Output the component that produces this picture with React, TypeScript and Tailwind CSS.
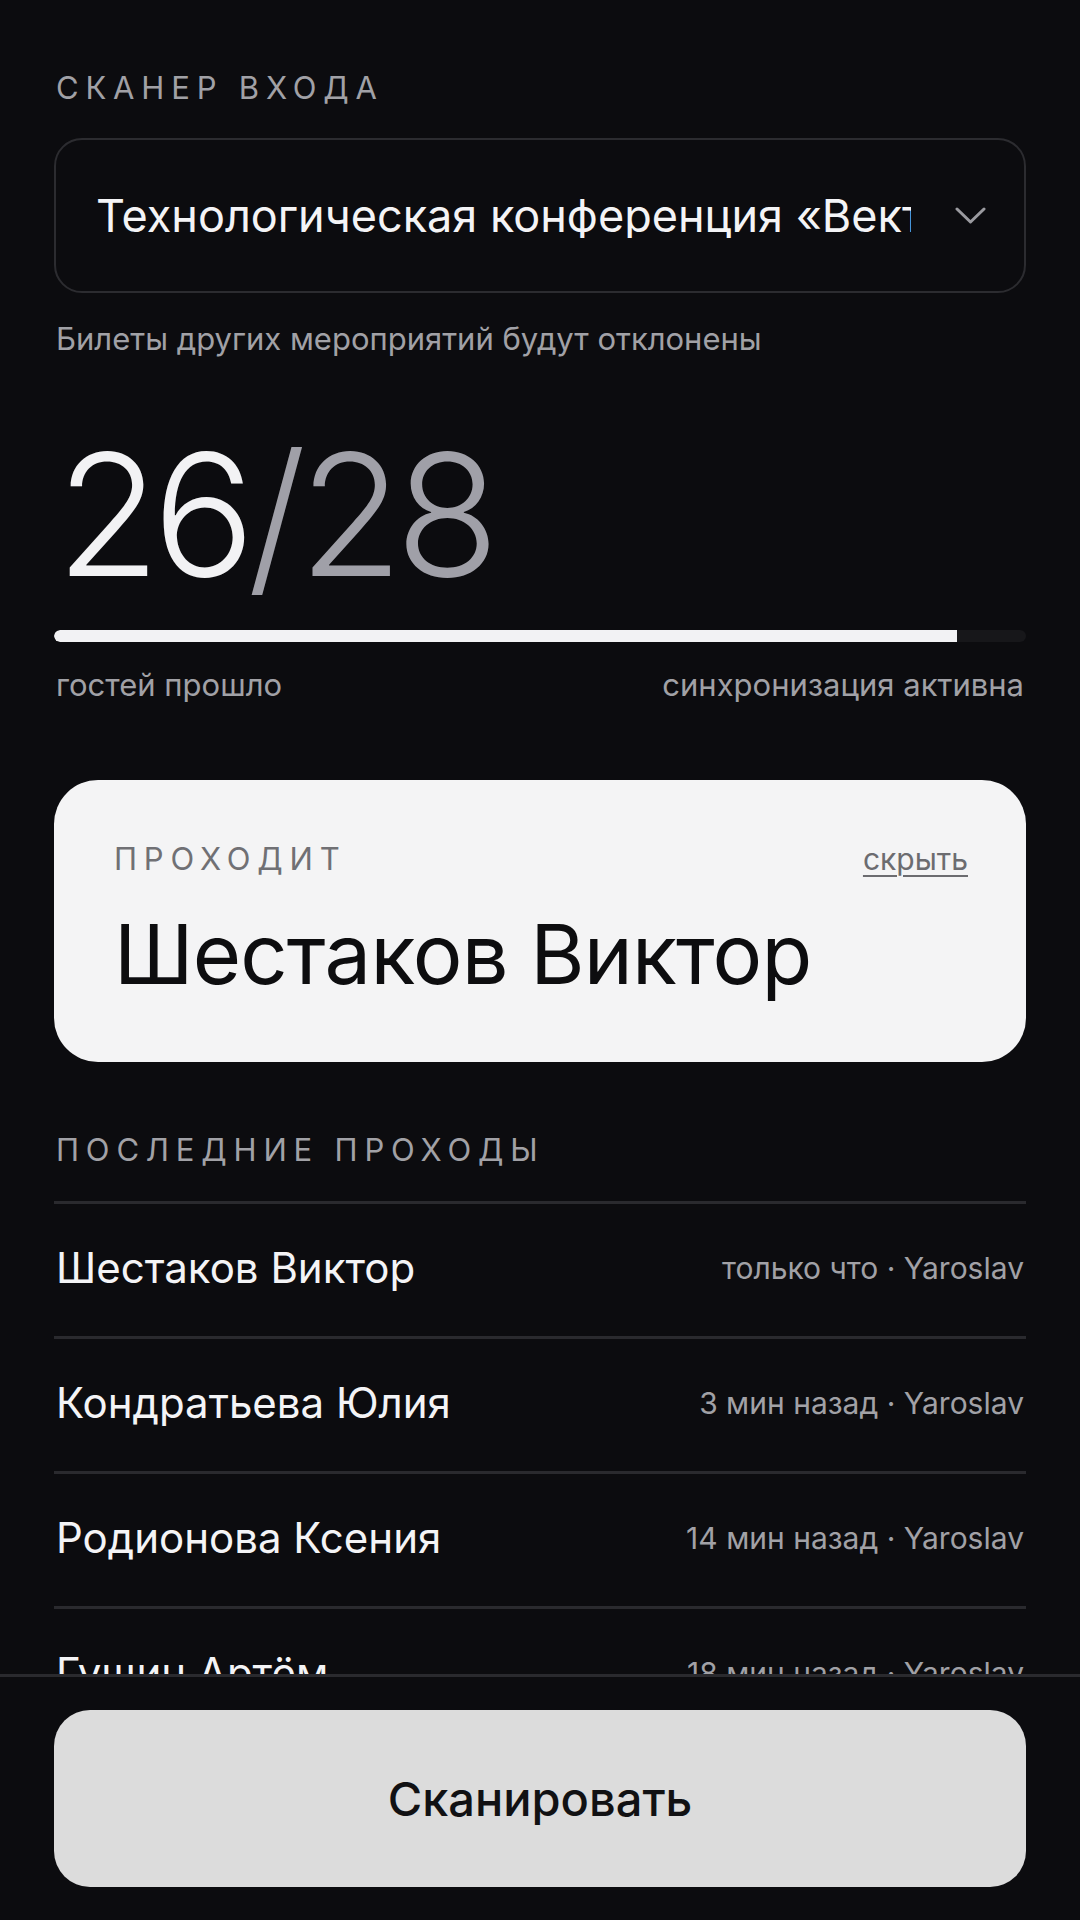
import React from "react";

const rows = [
  { name: "Шестаков Виктор", meta: "только что · Yaroslav" },
  { name: "Кондратьева Юлия", meta: "3 мин назад · Yaroslav" },
  { name: "Родионова Ксения", meta: "14 мин назад · Yaroslav" },
  { name: "Гущин Артём", meta: "18 мин назад · Yaroslav" },
  { name: "Лебедева Анна", meta: "21 мин назад · Yaroslav" },
];

export default function App() {
  const passed = 26;
  const total = 28;
  const pct = (passed / total) * 100;
  return (
    <div
      className="relative h-screen w-full overflow-hidden bg-[#0c0c0f] text-[#f2f2f4]"
      style={{ fontFamily: "Inter, 'Noto Sans', sans-serif" }}
    >
      <main className="flex flex-col px-[54px] pt-[72px]">
        <div className="px-[2px] text-[31px] leading-none tracking-[0.22em] text-[#a1a1a6]">СКАНЕР ВХОДА</div>

        <div className="mt-[35px] flex h-[155px] items-center rounded-[28px] border-2 border-[#2c2c30] pl-[40px] pr-[38px]">
          <div className="min-w-0 flex-1 overflow-hidden whitespace-nowrap text-[45px] leading-none text-[#f4f4f6]">
            Технологическая конференция «Вектор 2025»
          </div>
          <svg className="ml-[44px] shrink-0" width="31" height="17" viewBox="0 0 31 17" fill="none">
            <path d="M2 2 L15.5 15 L29 2" stroke="#9b9ba0" strokeWidth="3" strokeLinecap="round" strokeLinejoin="round" />
          </svg>
        </div>

        <div className="mt-[30px] px-[2px] text-[31px] leading-none text-[#a1a1a6]">
          Билеты других мероприятий будут отклонены
        </div>

        <div className="mt-[75px] px-[2px] text-[170px] font-light leading-none tracking-[-0.045em]">
          <span className="text-[#f2f2f4]">{passed}</span>
          <span className="text-[#a0a0a8]">/{total}</span>
        </div>

        <div className="mt-[31px] h-[12px] w-full overflow-hidden rounded-full bg-[#17171a]">
          <div className="h-full rounded-l-full bg-[#f2f2f4]" style={{ width: `${pct}%` }} />
        </div>

        <div className="mt-[27px] flex items-baseline justify-between px-[2px] text-[31px] leading-none text-[#a1a1a6]">
          <span>гостей прошло</span>
          <span>синхронизация активна</span>
        </div>

        <div className="mt-[80px] flex h-[282px] flex-col rounded-[44px] bg-[#f4f4f5] pl-[60px] pr-[58px] pt-[63px]">
          <div className="flex items-baseline justify-between">
            <span className="text-[31px] leading-none tracking-[0.22em] text-[#707074]">ПРОХОДИТ</span>
            <span className="text-[30px] leading-none text-[#6c6c70] underline decoration-2 underline-offset-[5px]">
              скрыть
            </span>
          </div>
          <div className="mt-[39px] text-[83px] leading-none tracking-[-0.01em] text-[#0d0d0f]">Шестаков Виктор</div>
        </div>

        <div className="mt-[72px] px-[2px] text-[31px] leading-none tracking-[0.22em] text-[#a1a1a6]">
          ПОСЛЕДНИЕ ПРОХОДЫ
        </div>

        <ul className="mt-[36px] flex flex-col">
          {rows.map((r) => (
            <li
              key={r.name}
              className="flex h-[135px] items-center justify-between border-t-[3px] border-[#2a2a2e] px-[2px] pb-[4px]"
            >
              <span className="text-[42px] leading-none text-[#f4f4f6]">{r.name}</span>
              <span className="text-[30px] leading-none text-[#a1a1a6]">{r.meta}</span>
            </li>
          ))}
        </ul>
      </main>

      <footer className="absolute inset-x-0 bottom-0 h-[246px] border-t-[3px] border-[#2a2a2e] bg-[#0c0c0f] px-[54px] pt-[33px]">
        <button className="flex h-[177px] w-full items-center justify-center rounded-[36px] bg-[#dcdcdc] text-[47px] font-medium leading-none text-[#111113]">
          Сканировать
        </button>
      </footer>
    </div>
  );
}
